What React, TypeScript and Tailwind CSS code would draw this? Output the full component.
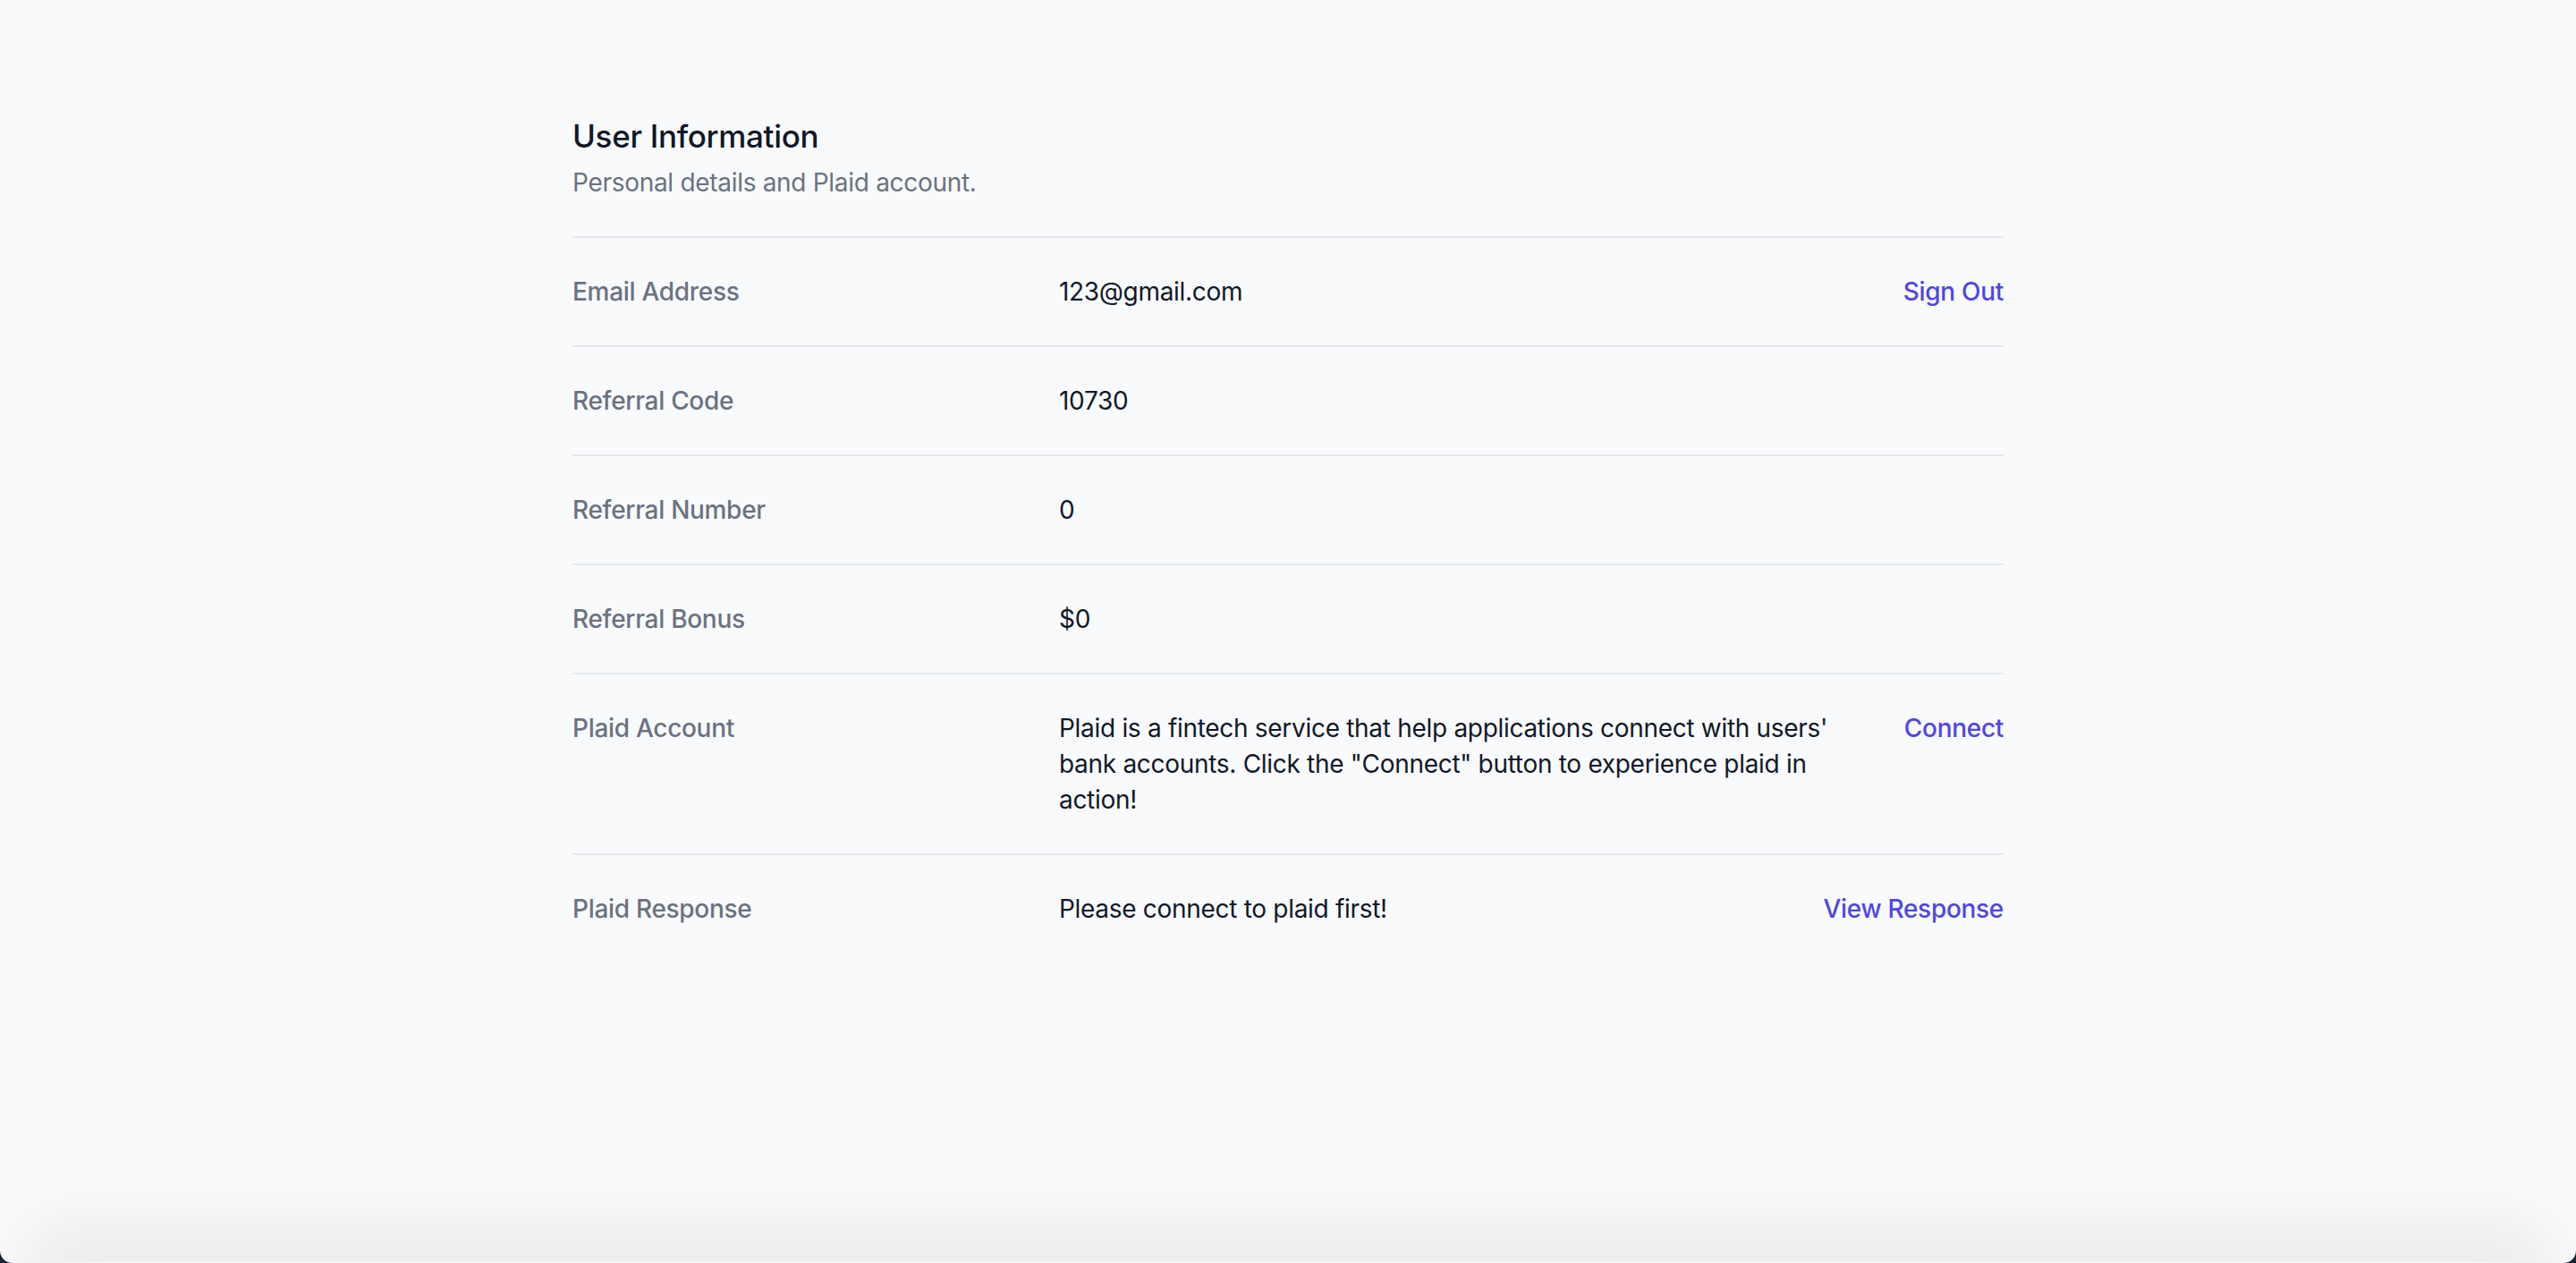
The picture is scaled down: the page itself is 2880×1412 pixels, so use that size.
import React from "react"

type Row = {
  label: string
  value: string
  action?: string
}

const rows: Row[] = [
  { label: "Email Address", value: "123@gmail.com", action: "Sign Out" },
  { label: "Referral Code", value: "10730" },
  { label: "Referral Number", value: "0" },
  { label: "Referral Bonus", value: "$0" },
  {
    label: "Plaid Account",
    value:
      "Plaid is a fintech service that help applications connect with users' bank accounts. Click the \"Connect\" button to experience plaid in action!",
    action: "Connect",
  },
  { label: "Plaid Response", value: "Please connect to plaid first!", action: "View Response" },
]

export default function App() {
  return (
    <div className="bg-[#1c2433] font-['Inter','Noto_Sans',sans-serif] tracking-[-0.3px]">
      <div className="h-screen flex flex-col overflow-hidden rounded-b-[14px] bg-[#f9fafb]">
        {/* Main content */}
        <div className="flex-1 pt-[128px]">
          <div className="max-w-[1600px] mx-auto">
            <h3 className="text-[35px] leading-[48px] font-medium text-gray-900">User Information</h3>
            <p className="mt-2 text-[28px] leading-[40px] text-gray-500">Personal details and Plaid account.</p>

            <dl className="mt-10 border-t-2 border-gray-200 divide-y-2 divide-gray-200">
              {rows.map((row) => (
                <div key={row.label} className="grid grid-cols-3 gap-x-8 py-10">
                  <dt className="text-[28px] leading-[40px] font-medium text-gray-500">{row.label}</dt>
                  <dd className="col-span-2 flex text-[28px] leading-[40px] text-gray-900">
                    <span className="flex-grow">{row.value}</span>
                    {row.action && (
                      <span className="ml-8 shrink-0">
                        <button className="font-medium text-[#4f46e5]">{row.action}</button>
                      </span>
                    )}
                  </dd>
                </div>
              ))}
            </dl>
          </div>
        </div>

        {/* Bottom edge shadow */}
        <div className="mx-[70px] h-px shadow-[0_0_70px_36px_rgba(17,24,39,0.08)]" />
      </div>
    </div>
  )
}
